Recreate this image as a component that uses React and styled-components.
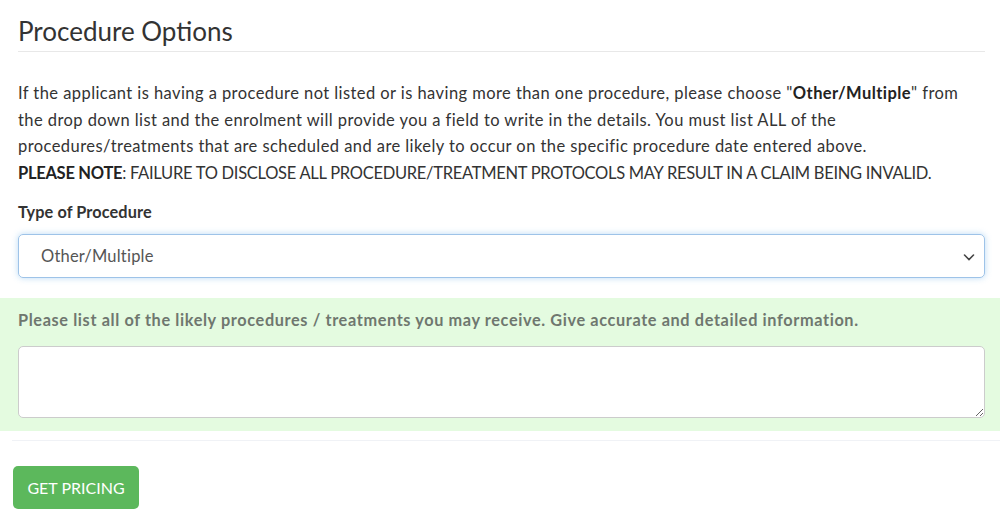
import styled, { createGlobalStyle } from "styled-components";

const GlobalStyle = createGlobalStyle`
  body {
    margin: 0;
    background: #fff;
    font-family: "Lato", "Liberation Sans", sans-serif;
    color: #333;
  }
`;

const Page = styled.div`
  width: 1000px;
  padding-top: 14px;
`;

const Section = styled.div`
  padding: 0 15px 0 18px;
`;

const Title = styled.h2`
  margin: 0;
  font-size: 26px;
  font-weight: 400;
  line-height: 34px;
  color: #333;
  padding-bottom: 3px;
  border-bottom: 1px solid #e8e8e8;
`;

const Intro = styled.p`
  margin: 28px 0 0;
  font-size: 16.5px;
  line-height: 26.6px;
  letter-spacing: 0.43px;
  color: #333;
  white-space: nowrap;
  b {
    font-weight: 700;
    color: #222;
  }
`;

const Notice = styled.span`
  letter-spacing: -0.28px;
`;

const Label = styled.label`
  display: block;
  margin: 16px 0 13px;
  font-size: 16.3px;
  font-weight: 700;
  letter-spacing: ${(p) => (p.$muted ? "0.62px" : "0.1px")};
  color: ${(p) => (p.$muted ? "#6f776f" : "#333")};
`;

const SelectBox = styled.div`
  position: relative;
  height: 44px;
  box-sizing: border-box;
  border: 1px solid #9ec3e8;
  border-radius: 5px;
  box-shadow: 0 0 6px rgba(102, 175, 233, 0.45);
  display: flex;
  align-items: center;
  padding: 0 0 0 22px;
  font-size: 16.5px;
  letter-spacing: 0.2px;
  color: #555;
  margin-bottom: 20px;
`;

const Chevron = styled.svg`
  position: absolute;
  right: 9px;
  top: 17px;
`;

const GreenPanel = styled.div`
  background: #e4fbe0;
  padding: 12px 15px 13px 18px;
  label {
    margin-top: 0;
  }
`;

const TextArea = styled.textarea`
  display: block;
  width: 100%;
  height: 72px;
  box-sizing: border-box;
  border: 1px solid #ccc;
  border-radius: 5px;
  background: #fff;
  resize: vertical;
  font-family: inherit;
  margin-top: 17px;
`;

const Divider = styled.div`
  margin: 9px 0 0 12px;
  border-top: 1px solid #f0f2f6;
`;

const Footer = styled.div`
  padding: 25px 0 0 13px;
`;

const Button = styled.button`
  background: #5cb85c;
  border: none;
  border-radius: 5px;
  color: #fff;
  font-family: inherit;
  font-size: 16px;
  height: 43px;
  width: 126px;
  padding: 0;
  cursor: pointer;
`;

export default function App() {
  return (
    <Page>
      <GlobalStyle />
      <Section>
        <Title>Procedure Options</Title>
        <Intro>
          If the applicant is having a procedure not listed or is having more than one procedure, please choose "
          <b>Other/Multiple</b>" from
          <br />
          the drop down list and the enrolment will provide you a field to write in the details. You must list ALL of the
          <br />
          procedures/treatments that are scheduled and are likely to occur on the specific procedure date entered above.
          <br />
          <Notice>
            <b>PLEASE NOTE</b>: FAILURE TO DISCLOSE ALL PROCEDURE/TREATMENT PROTOCOLS MAY RESULT IN A CLAIM BEING INVALID.
          </Notice>
        </Intro>
        <Label>Type of Procedure</Label>
        <SelectBox>
          Other/Multiple
          <Chevron width="12" height="10" viewBox="0 0 12 10">
            <path d="M1.5 3 L6 7.5 L10.5 3" fill="none" stroke="#444" strokeWidth="1.6" strokeLinecap="round" />
          </Chevron>
        </SelectBox>
      </Section>
      <GreenPanel>
        <Label $muted>
          Please list all of the likely procedures / treatments you may receive. Give accurate and detailed information.
        </Label>
        <TextArea />
      </GreenPanel>
      <Divider />
      <Footer>
        <Button>GET PRICING</Button>
      </Footer>
    </Page>
  );
}
